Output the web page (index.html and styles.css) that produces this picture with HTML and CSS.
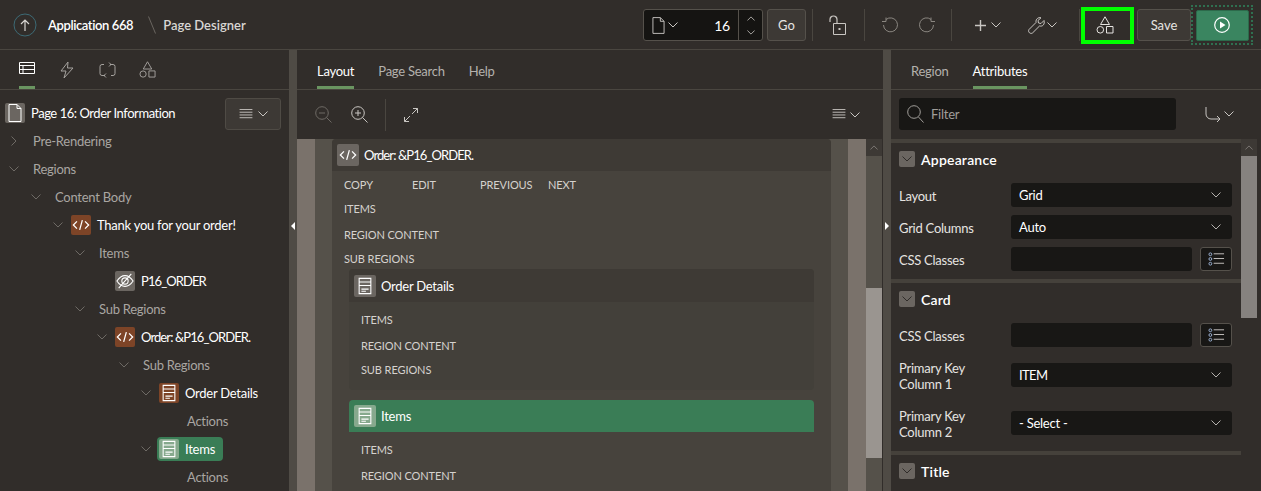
FILE: index.html
```html
<!DOCTYPE html>
<html lang="en">
<head>
    <meta charset="UTF-8">
    <title>Page Designer</title>
    <link rel="stylesheet" href="styles.css">
</head>
<body>
    <svg class="defs" width="0" height="0">
        <defs>
            <symbol id="i-chev" viewBox="0 0 10 6"><path d="M.5.5 5 5 9.500.5" fill="none" stroke="currentColor"/></symbol>
            <symbol id="i-shapes" viewBox="0 0 18 18"><path d="M9 .8 13.500 8.500h-9zM10.500 10.500h6.500v6.500h-6.500z" fill="none" stroke="currentColor"/><circle cx="4.300" cy="13.800" r="3.300" fill="none" stroke="currentColor"/></symbol>
            <symbol id="i-page" viewBox="0 0 14 18"><path d="M1 .5h8l4 4v13H1zM9 .5v4h4" fill="none" stroke="currentColor"/></symbol>
            <symbol id="i-menu" viewBox="0 0 14 12"><path d="M0 .5h14M0 3.500h14M0 6.500h14M0 9.500h14" fill="none" stroke="currentColor"/></symbol>
            <symbol id="i-code" viewBox="0 0 20 20"><path d="M5.500 6 1.500 10l4 4M14.500 6l4 4-4 4M11.500 4.500l-3 11" fill="none" stroke="currentColor" stroke-width="1.400"/></symbol>
            <symbol id="i-form" viewBox="0 0 20 20"><path d="M3.500 1.500h13v17h-13zM3.500 5.500h13M3.500 9.500h13M6 13.500h8M6 15.800h5" fill="none" stroke="currentColor" stroke-width="1.200"/></symbol>
            <symbol id="i-hidden" viewBox="0 0 20 20"><path d="M1 10c3-4.500 6-6 9-6s6 1.500 9 6c-3 4.500-6 6-9 6s-6-1.500-9-6zM17 2 3 18" fill="none" stroke="currentColor" stroke-width="1.200"/><circle cx="10" cy="10" r="3.500" fill="none" stroke="currentColor" stroke-width="1.200"/></symbol>
            <symbol id="i-list" viewBox="0 0 18 14"><circle cx="2.500" cy="2" r="1.500" fill="none" stroke="#9db4d6"/><circle cx="2.500" cy="7" r="1.500" fill="none" stroke="#9db4d6"/><circle cx="2.500" cy="12" r="1.500" fill="none" stroke="#9db4d6"/><path d="M6 1.500h11M6 6.500h11M6 11.500h11" stroke="currentColor" fill="none"/></symbol>
        </defs>
    </svg>

    <header class="topbar">
        <div class="crumbs">
            <svg class="up-btn" width="24" height="24" viewBox="0 0 24 24"><circle cx="12" cy="12" r="11" fill="none" stroke="#3d6a75"/><path d="M12 18V7M8 11l4-4 4 4" fill="none" stroke="#d8d5d2" stroke-width="1.200"/></svg>
            <span class="crumb-app">Application 668</span>
            <svg class="crumb-sep" width="8" height="18" viewBox="0 0 8 18"><path d="M.5.500 7.500 17.500" stroke="#6b6761" fill="none"/></svg>
            <span class="crumb-page">Page Designer</span>
        </div>
        <div class="tools">
            <div class="page-picker">
                <svg class="pp-page" width="13" height="17"><use href="#i-page"/></svg>
                <svg class="chev" width="10" height="6"><use href="#i-chev"/></svg>
                <span class="pp-num">16</span>
                <div class="pp-spin">
                    <svg class="chev flip" width="8" height="5"><use href="#i-chev"/></svg>
                    <svg class="chev" width="8" height="5"><use href="#i-chev"/></svg>
                </div>
            </div>
            <button class="btn btn-go">Go</button>
            <span class="divider div-a"></span>
            <svg class="tool-lock" width="17" height="20" viewBox="0 0 17 20"><path d="M1 7V4.500a3.500 3.500 0 0 1 7 0V8" fill="none" stroke="currentColor" stroke-width="1.200"/><path d="M4.500 8.500h12v11h-12z" fill="none" stroke="currentColor"/><rect x="9.500" y="13" width="2" height="2" fill="currentColor"/></svg>
            <span class="divider div-b"></span>
            <svg class="tool-undo" width="16" height="16" viewBox="0 0 16 16"><path d="M4 2.500a7 7 0 1 1-2.500 5.500M4 .5v4H0" fill="none" stroke="currentColor"/></svg>
            <svg class="tool-redo" width="16" height="16" viewBox="0 0 16 16"><path d="M12 2.500a7 7 0 1 0 2.500 5.500M12 .5v4h4" fill="none" stroke="currentColor"/></svg>
            <span class="divider div-c"></span>
            <svg class="tool-plus" width="11" height="11" viewBox="0 0 11 11"><path d="M5.500 0v11M0 5.500h11" stroke="currentColor" stroke-width="1.400"/></svg>
            <svg class="chev" width="10" height="6"><use href="#i-chev"/></svg>
            <svg class="tool-wrench" width="17" height="17" viewBox="0 0 17 17"><path d="M16 3.500 13 6.500l-2.500-.5L10 3.500 13 .8C10.500 0 7.500 1.800 8 5.500L1 12.500C.3 13.500.5 15 1.500 15.800s2.500.8 3.200 0L11.500 9c3.500.8 5.500-2 4.500-5.500z" fill="none" stroke="currentColor"/></svg>
            <svg class="chev" width="10" height="6"><use href="#i-chev"/></svg>
            <span class="divider div-d"></span>
            <div class="shapes-hl"><svg width="18" height="18"><use href="#i-shapes"/></svg></div>
            <button class="btn btn-save">Save</button>
            <div class="run-wrap">
                <button class="btn-run"><svg width="16" height="16" viewBox="0 0 16 16"><circle cx="8" cy="8" r="7.300" fill="none" stroke="#fff" stroke-width="1.200"/><path d="M6 4.500 11.500 8 6 11.500z" fill="#fff"/></svg></button>
            </div>
        </div>
    </header>

    <main class="designer">
        <section class="panel">
            <div class="tabs tabs-icons">
                <span class="icon-tab active"><svg width="16" height="12" viewBox="0 0 16 12"><path d="M.5.5h15v11H.500zM.5 3.500h15M.5 7.500h15M4 3.500v8" fill="none" stroke="currentColor"/></svg></span>
                <span class="icon-tab"><svg width="14" height="18" viewBox="0 0 14 18"><path d="M8 1 1 10h5l-2 7 9-10H7.500z" fill="none" stroke="currentColor"/></svg></span>
                <span class="icon-tab"><svg width="17" height="16" viewBox="0 0 17 16"><path d="M5 2.500H3A2 2 0 0 0 1 4.500v7a2 2 0 0 0 2 2h3M12 13.500h2a2 2 0 0 0 2-2v-7a2 2 0 0 0-2-2h-3M10 .5l2 2-2 2M7 11.500l-2 2 2 2" fill="none" stroke="currentColor"/></svg></span>
                <span class="icon-tab"><svg width="17" height="17"><use href="#i-shapes"/></svg></span>
            </div>
            <div class="tree">
                <div class="tree-row lv-root">
                    <span class="node-icon ic-grey"><svg width="14" height="18"><use href="#i-page"/></svg></span>
                    <span class="node-label strong root-label">Page 16: Order Information</span>
                    <button class="btn-menu"><svg width="14" height="11"><use href="#i-menu"/></svg><svg width="10" height="6"><use href="#i-chev"/></svg></button>
                </div>
                <div class="tree-row lv0"><svg class="tog" width="6" height="10" viewBox="0 0 6 10"><path d="M.5.500 5 5 .5 9.500" fill="none" stroke="currentColor"/></svg><span class="node-label">Pre-Rendering</span></div>
                <div class="tree-row lv0"><svg class="tog" width="10" height="6"><use href="#i-chev"/></svg><span class="node-label">Regions</span></div>
                <div class="tree-row lv1"><svg class="tog" width="10" height="6"><use href="#i-chev"/></svg><span class="node-label">Content Body</span></div>
                <div class="tree-row lv2"><svg class="tog" width="10" height="6"><use href="#i-chev"/></svg><span class="node-icon ic-brown"><svg width="18" height="18"><use href="#i-code"/></svg></span><span class="node-label strong">Thank you for your order!</span></div>
                <div class="tree-row lv3"><svg class="tog" width="10" height="6"><use href="#i-chev"/></svg><span class="node-label">Items</span></div>
                <div class="tree-row lv4 no-tog"><span class="node-icon ic-grey"><svg width="18" height="18"><use href="#i-hidden"/></svg></span><span class="node-label strong caps">P16_ORDER</span></div>
                <div class="tree-row lv3"><svg class="tog" width="10" height="6"><use href="#i-chev"/></svg><span class="node-label">Sub Regions</span></div>
                <div class="tree-row lv4"><svg class="tog" width="10" height="6"><use href="#i-chev"/></svg><span class="node-icon ic-brown"><svg width="18" height="18"><use href="#i-code"/></svg></span><span class="node-label strong caps">Order: &amp;P16_ORDER.</span></div>
                <div class="tree-row lv5"><svg class="tog" width="10" height="6"><use href="#i-chev"/></svg><span class="node-label">Sub Regions</span></div>
                <div class="tree-row lv6"><svg class="tog" width="10" height="6"><use href="#i-chev"/></svg><span class="node-icon ic-brown"><svg width="18" height="18"><use href="#i-form"/></svg></span><span class="node-label strong">Order Details</span></div>
                <div class="tree-row lv7 no-tog"><span class="node-label">Actions</span></div>
                <div class="tree-row lv6"><svg class="tog" width="10" height="6"><use href="#i-chev"/></svg><span class="selected"><span class="node-icon ic-sel"><svg width="18" height="18"><use href="#i-form"/></svg></span><span class="node-label strong">Items</span></span></div>
                <div class="tree-row lv7 no-tog"><span class="node-label">Actions</span></div>
            </div>
        </section>

        <div class="gutter"><span class="arrow arrow-left"></span></div>

        <section class="panel">
            <div class="tabs">
                <span class="tab active">Layout</span>
                <span class="tab">Page Search</span>
                <span class="tab">Help</span>
            </div>
            <div class="grid-tools">
                <svg class="gt-out" width="17" height="17" viewBox="0 0 17 17"><circle cx="7" cy="7" r="6.300" fill="none" stroke="currentColor"/><path d="m11.500 11.500 5 5M4 7h6" stroke="currentColor" fill="none"/></svg>
                <svg class="gt-in" width="17" height="17" viewBox="0 0 17 17"><circle cx="7" cy="7" r="6.300" fill="none" stroke="currentColor"/><path d="m11.500 11.500 5 5M4 7h6M7 4v6" stroke="currentColor" fill="none"/></svg>
                <span class="divider gt-div"></span>
                <svg class="gt-exp" width="14" height="14" viewBox="0 0 14 14"><path d="M8 6l5.500-5.500M9 .5h4.500V5M6 8 .5 13.500M5 13.500H.5V9" fill="none" stroke="currentColor"/></svg>
                <span class="gt-menu"><svg width="14" height="11"><use href="#i-menu"/></svg><svg width="10" height="6"><use href="#i-chev"/></svg></span>
            </div>
            <div class="canvas">
                <div class="strip strip-light"></div>
                <div class="strip strip-mid"></div>
                <div class="card-col">
                    <div class="lcard">
                        <div class="lcard-head">
                            <span class="head-icon ic-grey"><svg width="18" height="18"><use href="#i-code"/></svg></span>
                            <span class="caps">Order: &amp;P16_ORDER.</span>
                        </div>
                        <div class="lcard-actions"><span>COPY</span><span>EDIT</span><span>PREVIOUS</span><span>NEXT</span></div>
                        <div class="slot s-items">ITEMS</div>
                        <div class="slot s-content">REGION CONTENT</div>
                        <div class="slot s-sub">SUB REGIONS</div>
                        <div class="subcard">
                            <div class="lcard-head">
                                <span class="head-icon ic-grey"><svg width="18" height="18"><use href="#i-form"/></svg></span>
                                <span>Order Details</span>
                            </div>
                            <div class="slot sc-items">ITEMS</div>
                            <div class="slot sc-content">REGION CONTENT</div>
                            <div class="slot sc-sub">SUB REGIONS</div>
                        </div>
                        <div class="subcard is-selected">
                            <div class="lcard-head">
                                <span class="head-icon ic-sel"><svg width="18" height="18"><use href="#i-form"/></svg></span>
                                <span>Items</span>
                            </div>
                            <div class="slot sc-items">ITEMS</div>
                            <div class="slot sc-content">REGION CONTENT</div>
                        </div>
                    </div>
                </div>
                <div class="strip strip-mid"></div>
                <div class="strip strip-light"></div>
                <div class="scroll scroll-canvas">
                    <div class="scroll-up"><svg width="8" height="5"><use href="#i-chev"/></svg></div>
                    <div class="thumb thumb-canvas"></div>
                </div>
            </div>
        </section>

        <div class="gutter"><span class="arrow arrow-right"></span></div>

        <section class="panel">
            <div class="tabs">
                <span class="tab">Region</span>
                <span class="tab active">Attributes</span>
            </div>
            <div class="filter-row">
                <div class="filter">
                    <svg width="17" height="18" viewBox="0 0 17 18"><circle cx="7" cy="7" r="6.300" fill="none" stroke="currentColor"/><path d="m11.500 12 5 5.500" stroke="currentColor" fill="none"/></svg>
                    <span>Filter</span>
                </div>
                <span class="route"><svg width="16" height="16" viewBox="0 0 16 16"><path d="M1 1v7a5 5 0 0 0 5 5h9M12 10l3 3-3 3" fill="none" stroke="currentColor"/></svg><svg width="10" height="6"><use href="#i-chev"/></svg></span>
            </div>
            <div class="props-wrap">
                <div class="props">
                    <div class="prop-group">
                        <div class="group-head"><span class="group-tog"><svg width="10" height="6"><use href="#i-chev"/></svg></span>Appearance</div>
                        <div class="prop"><label>Layout</label><div class="field">Grid<svg width="10" height="6"><use href="#i-chev"/></svg></div></div>
                        <div class="prop"><label>Grid Columns</label><div class="field">Auto<svg width="10" height="6"><use href="#i-chev"/></svg></div></div>
                        <div class="prop"><label>CSS Classes</label><div class="field-pair"><div class="field"></div><span class="list-btn"><svg width="17" height="14"><use href="#i-list"/></svg></span></div></div>
                    </div>
                    <div class="prop-group">
                        <div class="group-head"><span class="group-tog"><svg width="10" height="6"><use href="#i-chev"/></svg></span>Card</div>
                        <div class="prop"><label>CSS Classes</label><div class="field-pair"><div class="field"></div><span class="list-btn"><svg width="17" height="14"><use href="#i-list"/></svg></span></div></div>
                        <div class="prop tall"><label>Primary Key<br>Column 1</label><div class="field"><span class="caps-sm">ITEM</span><svg width="10" height="6"><use href="#i-chev"/></svg></div></div>
                        <div class="prop tall"><label>Primary Key<br>Column 2</label><div class="field">- Select -<svg width="10" height="6"><use href="#i-chev"/></svg></div></div>
                    </div>
                    <div class="prop-group">
                        <div class="group-head"><span class="group-tog"><svg width="10" height="6"><use href="#i-chev"/></svg></span>Title</div>
                    </div>
                </div>
                <div class="scroll scroll-props">
                    <div class="scroll-up"><svg width="8" height="5"><use href="#i-chev"/></svg></div>
                    <div class="thumb thumb-props"></div>
                </div>
            </div>
        </section>
    </main>
</body>
</html>
```

FILE: styles.css
```css
* {
    box-sizing: border-box;
}

html,
body {
    height: 100%;
}

body {
    margin: 0;
    display: flex;
    flex-direction: column;
    overflow: hidden;
    background-color: #312d2a;
    color: #fff;
    font-family: "Lato", "Open Sans", sans-serif;
    font-size: 13px;
    letter-spacing: -0.25px;
}

svg {
    display: block;
    flex: none;
}

.defs {
    position: absolute;
}

.flip {
    transform: scaleY(-1);
}

.caps {
    letter-spacing: -0.9px;
}

.caps-sm {
    letter-spacing: -0.6px;
}

/* top bar */
.topbar {
    flex: none;
    display: flex;
    justify-content: space-between;
    height: 50px;
    padding-left: 13px;
    border-bottom: 1px solid #4a4640;
}

.crumbs {
    display: flex;
    align-items: center;
}

.crumb-app {
    margin-left: 11px;
    font-weight: 600;
    letter-spacing: -0.4px;
}

.crumb-sep {
    margin-left: 15px;
}

.crumb-page {
    margin-left: 7px;
    font-weight: 600;
    letter-spacing: 0;
    color: #d9d7d4;
}

.tools {
    display: flex;
    align-items: center;
    padding-right: 8px;
    color: #c9c6c2;
    height: 50px;
}

.tools .chev {
    color: #c9c6c2;
}

.page-picker {
    display: flex;
    align-items: center;
    width: 120px;
    height: 32px;
    background-color: #151412;
    border: 1px solid #55514b;
    border-radius: 3px;
    padding-left: 8px;
}

.pp-page {
    margin-right: 3px;
}

.pp-num {
    margin-left: auto;
    margin-right: 8px;
    font-size: 14px;
    color: #fff;
}

.pp-spin {
    display: flex;
    flex-direction: column;
    align-items: center;
    justify-content: center;
    gap: 9px;
    width: 24px;
    height: 30px;
    border-left: 1px solid #55514b;
}

.btn {
    height: 32px;
    background-color: #3d3935;
    border: 1px solid #55514b;
    border-radius: 3px;
    color: #e6e4e1;
    font-family: inherit;
    font-size: 13px;
}

.btn-go {
    width: 39px;
    margin-left: 4px;
    padding: 0;
}

.divider {
    display: block;
    flex: none;
    width: 1px;
    height: 32px;
    background-color: #4a4640;
}

.div-a {
    margin-left: 6px;
}

.tool-lock {
    margin-left: 16px;
}

.div-b {
    margin-left: 18px;
}

.tool-undo {
    margin-left: 17px;
    color: #8a8680;
}

.tool-redo {
    margin-left: 21px;
    color: #8a8680;
}

.div-c {
    margin-left: 16px;
}

.tool-plus {
    margin-left: 23px;
    margin-right: 5px;
}

.tool-wrench {
    margin-left: 27px;
    margin-right: 2px;
}

.div-d {
    margin-left: 22px;
}

.shapes-hl {
    display: flex;
    align-items: center;
    justify-content: center;
    width: 53px;
    height: 37px;
    margin-left: 1px;
    padding-right: 6px;
    border: 4px solid #00ff00;
    color: #e6e4e1;
}

.btn-save {
    width: 54px;
    margin-left: 3px;
    padding: 0;
}

.run-wrap {
    display: flex;
    align-items: center;
    justify-content: center;
    width: 62px;
    height: 40px;
    border: 2px dotted #2f6f50;
}

.btn-run {
    display: flex;
    align-items: center;
    justify-content: center;
    width: 53px;
    height: 31px;
    padding: 0;
    background-color: #3a8560;
    border: 1px solid #2c6a4b;
    border-radius: 2px;
}

/* three panels */
.designer {
    flex: 1;
    min-height: 0;
    display: grid;
    grid-template-columns: 289px 8px 586px 8px 370px;
}

.panel {
    display: flex;
    flex-direction: column;
    min-width: 0;
    min-height: 0;
    overflow: hidden;
}

.gutter {
    display: flex;
    align-items: center;
    justify-content: center;
    background-color: #4f4b45;
    padding-bottom: 90px;
}

.arrow {
    display: block;
    border-top: 4px solid transparent;
    border-bottom: 4px solid transparent;
}

.arrow-left {
    border-right: 4px solid #fff;
}

.arrow-right {
    border-left: 4px solid #fff;
}

.tabs {
    flex: none;
    display: flex;
    height: 40px;
    padding-left: 20px;
    gap: 24px;
    border-bottom: 1px solid #4a4640;
}

.tab {
    display: flex;
    align-items: center;
    height: 39px;
    padding-top: 6px;
    border-bottom: 3px solid transparent;
    color: #b4b1ad;
}

.tab.active {
    color: #fff;
    border-bottom-color: #6a9561;
}

.tabs-icons {
    padding-left: 19px;
}

.icon-tab {
    display: flex;
    align-items: center;
    justify-content: center;
    width: 16px;
    height: 39px;
    color: #a5a29e;
}

.icon-tab.active {
    color: #fff;
    border-bottom: 3px solid #6a9561;
}

/* tree */
.tree {
    padding-top: 9px;
}

.tree-row {
    display: flex;
    align-items: center;
    height: 28px;
    color: #a9a6a2;
}

.lv-root {
    padding-left: 5px;
    padding-right: 8px;
}

.root-label {
    letter-spacing: -0.45px;
}

.lv0 { padding-left: 9px; }
.lv1 { padding-left: 31px; }
.lv2 { padding-left: 53px; }
.lv3 { padding-left: 75px; }
.lv4 { padding-left: 97px; }
.lv5 { padding-left: 119px; }
.lv6 { padding-left: 141px; }

.lv4.no-tog { padding-left: 115px; }
.lv7.no-tog { padding-left: 187px; }

.tog {
    margin-right: 8px;
    color: #6e6a65;
}

svg.tog[width="6"] {
    margin-left: 2px;
    margin-right: 10px;
}

.tog + .node-label {
    margin-left: 6px;
}

.node-icon {
    flex: none;
    display: flex;
    align-items: center;
    justify-content: center;
    width: 20px;
    height: 20px;
    margin-right: 6px;
    border-radius: 2px;
    color: #fff;
}

.ic-grey {
    background-color: #6b6661;
}

.ic-brown {
    background-color: #7d4427;
}

.ic-sel {
    background-color: #86a98d;
}

.node-label.strong {
    color: #fff;
}

.selected {
    display: flex;
    align-items: center;
    height: 24px;
    margin-left: -2px;
    padding: 0 8px 0 2px;
    background-color: #3a7d56;
    border-radius: 4px;
}

.btn-menu {
    display: flex;
    align-items: center;
    justify-content: center;
    gap: 5px;
    width: 56px;
    height: 32px;
    margin-top: 2px;
    margin-left: auto;
    padding: 0;
    background-color: #3d3935;
    border: 1px solid #4f4b45;
    border-radius: 3px;
    color: #c9c6c2;
}

/* layout grid */
.grid-tools {
    flex: none;
    display: flex;
    align-items: center;
    height: 49px;
    padding-left: 18px;
    color: #c9c6c2;
}

.gt-out {
    color: #6e6a65;
}

.gt-in {
    margin-left: 19px;
}

.gt-div {
    margin-left: 17px;
}

.gt-exp {
    margin-left: 18px;
}

.gt-menu {
    display: flex;
    align-items: center;
    gap: 4px;
    margin-left: auto;
    margin-right: 23px;
}

.canvas {
    flex: 1;
    min-height: 0;
    display: flex;
    overflow: hidden;
}

.strip {
    flex: none;
    height: 100%;
}

.strip-light {
    width: 18px;
    background-color: #7a726b;
}

.strip-mid {
    width: 17px;
    background-color: #55514a;
}

.card-col {
    flex: none;
    width: 499px;
    background-color: #55514a;
}

.lcard {
    background-color: #47433d;
    border-radius: 4px 4px 0 0;
    min-height: 400px;
    color: #d5d2ce;
    font-size: 11px;
    letter-spacing: -0.1px;
}

.lcard-head {
    display: flex;
    align-items: center;
    height: 32px;
    padding-left: 5px;
    background-color: #3e3a35;
    border-radius: 4px 4px 0 0;
    color: #fff;
    font-size: 13px;
    letter-spacing: -0.25px;
}

.lcard-head .caps {
    letter-spacing: -0.9px;
}

.head-icon {
    display: flex;
    align-items: center;
    justify-content: center;
    width: 22px;
    height: 22px;
    margin-right: 5px;
    border-radius: 2px;
    color: #fff;
}

.lcard-actions {
    display: flex;
    height: 28px;
    align-items: center;
    padding-left: 12px;
    padding-bottom: 2px;
}

.lcard-actions span {
    width: 68px;
}

.slot {
    display: flex;
    align-items: center;
    padding-left: 12px;
    padding-bottom: 2px;
}

.s-items {
    height: 20px;
}

.s-content {
    height: 32px;
}

.s-sub {
    height: 16px;
}

.subcard {
    margin: 2px 17px 10px;
    background-color: #43403a;
    border-radius: 4px;
    height: 121px;
    padding-bottom: 4px;
}

.subcard .lcard-head {
    height: 33px;
    margin-bottom: 5px;
}

.sc-items,
.sc-content {
    height: 26px;
}

.sc-sub {
    height: 22px;
}

.subcard.is-selected {
    background-color: #47433d;
    height: auto;
}

.is-selected .lcard-head {
    height: 32px;
    background-color: #3a7d56;
}

.scroll {
    flex: none;
    width: 16px;
    display: flex;
    flex-direction: column;
}

.scroll-canvas {
    background-color: #55514a;
}

.scroll-up {
    display: flex;
    align-items: center;
    justify-content: center;
    height: 17px;
    background-color: #3d3935;
    color: #8b8783;
}

.scroll-up svg {
    transform: scaleY(-1);
}

.thumb-canvas {
    height: 170px;
    margin-top: 132px;
    background-color: #9a9590;
}

/* property editor */
.filter-row {
    flex: none;
    display: flex;
    align-items: center;
    height: 49px;
    padding-left: 8px;
    padding-bottom: 1px;
}

.filter {
    display: flex;
    align-items: center;
    gap: 7px;
    width: 277px;
    height: 32px;
    padding-left: 8px;
    background-color: #181715;
    border-radius: 3px;
    color: #a09d99;
}

.route {
    display: flex;
    align-items: center;
    gap: 3px;
    margin-left: 29px;
    color: #c9c6c2;
}

.props-wrap {
    flex: 1;
    min-height: 0;
    display: flex;
    overflow: hidden;
}

.props {
    flex: none;
    width: 350px;
}

.prop-group {
    padding-bottom: 4px;
    border-top: 4px solid #45413b;
}

.group-head {
    display: flex;
    align-items: center;
    gap: 6px;
    height: 36px;
    padding-left: 8px;
    padding-bottom: 4px;
    font-size: 14px;
    font-weight: 600;
    letter-spacing: 0.2px;
}

.group-tog {
    display: flex;
    align-items: center;
    justify-content: center;
    width: 16px;
    height: 16px;
    background-color: #6b6661;
    border-radius: 2px;
    color: #302c29;
}

.prop {
    display: grid;
    grid-template-columns: 112px 221px;
    align-items: center;
    height: 32px;
    padding-left: 8px;
}

.prop.tall {
    height: 48px;
}

.prop label {
    padding-top: 1px;
    line-height: 16px;
    color: #e6e4e1;
}

.field {
    display: flex;
    align-items: center;
    justify-content: space-between;
    height: 24px;
    padding: 0 11px 0 8px;
    background-color: #181715;
    border-radius: 3px;
    flex: 1;
}

.field svg {
    color: #b4b1ad;
}

.field-pair {
    display: flex;
    gap: 8px;
}

.list-btn {
    display: flex;
    align-items: center;
    justify-content: center;
    flex: none;
    width: 32px;
    height: 24px;
    background-color: #181715;
    border: 1px solid #55514b;
    border-radius: 3px;
    color: #c9c6c2;
}

.scroll-props {
    background-color: #312d2a;
}

.thumb-props {
    height: 162px;
    background-color: #86827f;
}
```
